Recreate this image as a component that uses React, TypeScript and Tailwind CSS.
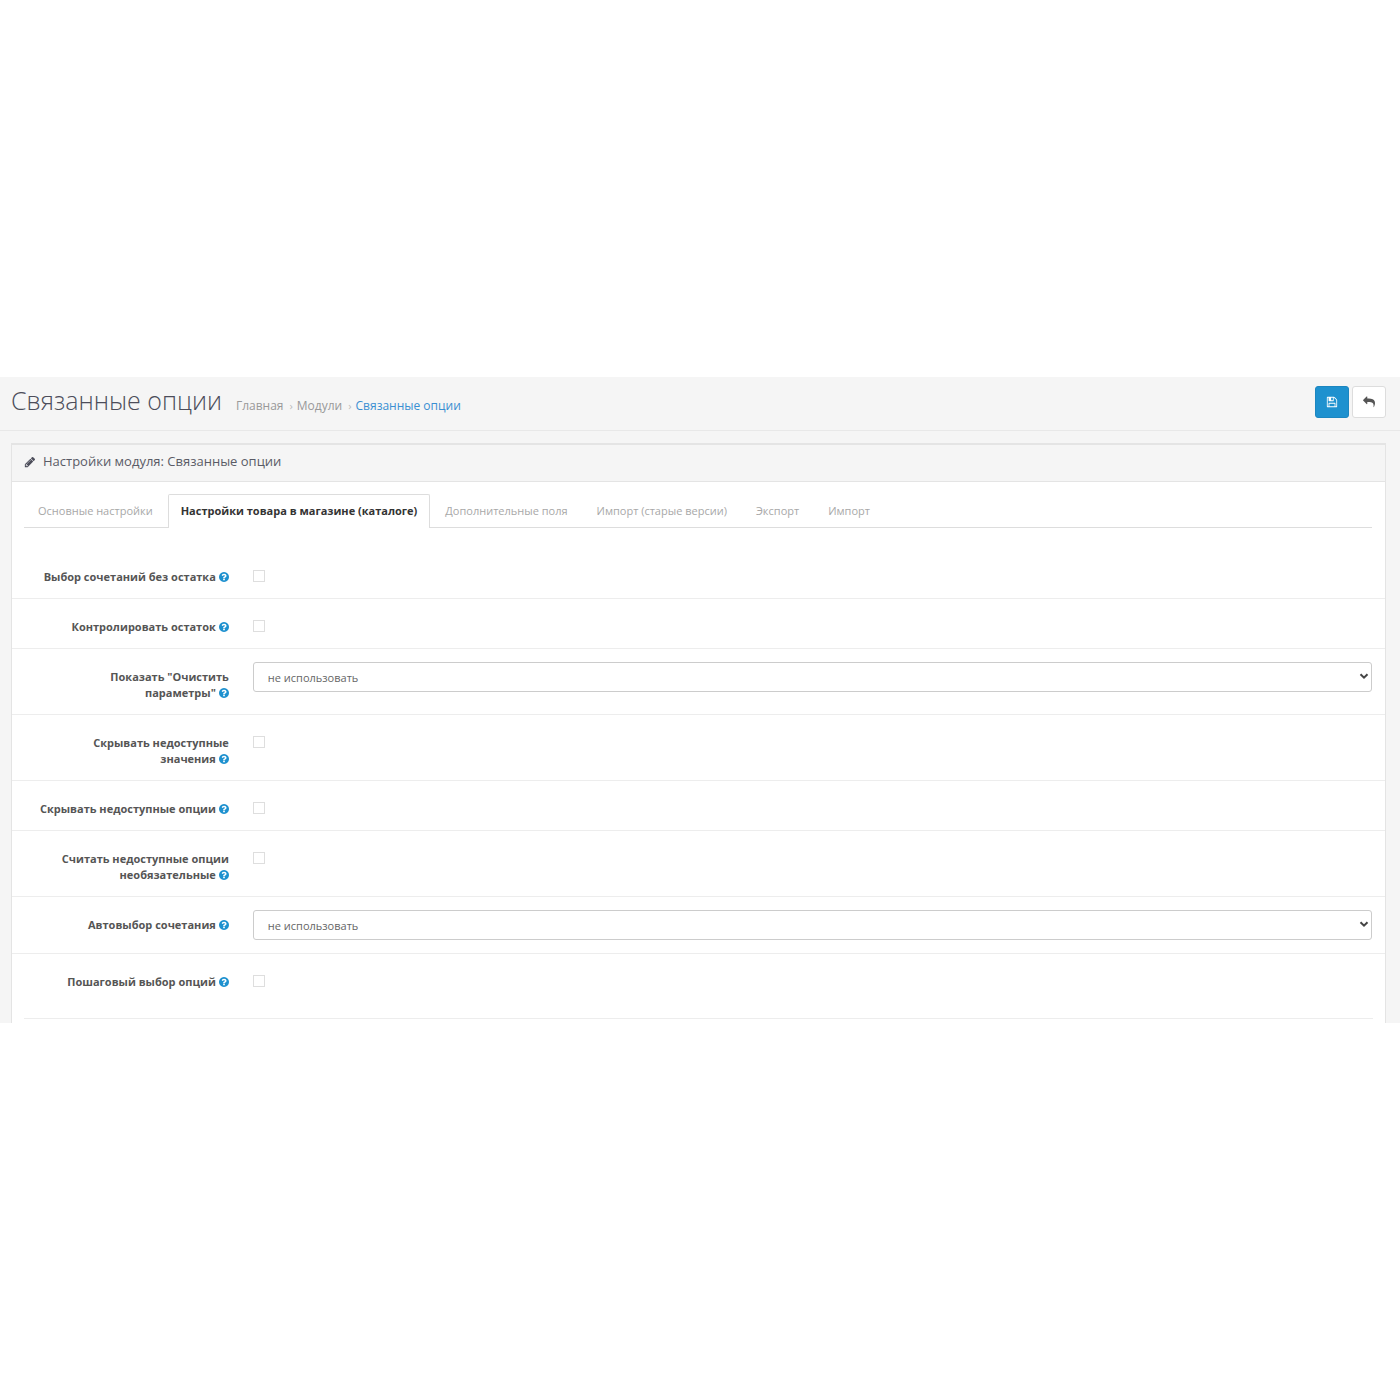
import { useState } from "react";

const icons = {
  save: "M512 1536h768v-384h-768v384zm896 0h128v-896q0-14-10-38.5t-20-34.5l-281-281q-10-10-34-20t-39-10v416q0 40-28 68t-68 28h-576q-40 0-68-28t-28-68v-416h-128v1280h128v-416q0-40 28-68t68-28h832q40 0 68 28t28 68v416zm-384-928v-320q0-13-9.5-22.5t-22.5-9.5h-192q-13 0-22.5 9.5t-9.5 22.5v320q0 13 9.5 22.5t22.5 9.5h192q13 0 22.5-9.5t9.5-22.5zm640 32v928q0 40-28 68t-68 28h-1344q-40 0-68-28t-28-68v-1344q0-40 28-68t68-28h928q40 0 88 20t76 48l280 280q28 28 48 76t20 88z",
  reply: "M1792 1120q0 166-127 451-3 7-10.5 24t-13.5 30-13 22q-12 17-28 17-15 0-23.5-10t-8.5-25q0-9 2.5-26.5t2.5-23.5q5-68 5-123 0-101-17.5-181t-48.5-138.5-80-101-105.5-69.5-133-42.5-154-21.5-175.5-6h-224v256q0 26-19 45t-45 19-45-19l-512-512q-19-19-19-45t19-45l512-512q19-19 45-19t45 19 19 45v256h224q713 0 875 403 53 134 53 333z",
  pencil: "M491 1536l91-91-235-235-91 91v107h128v128h107zm523-928q0-22-22-22-10 0-17 7l-542 542q-7 7-7 17 0 22 22 22 10 0 17-7l542-542q7-7 7-17zm-54-192l416 416-832 832h-416v-416zm683 96q0 53-37 90l-166 166-416-416 166-165q36-38 90-38 53 0 91 38l235 234q37 39 37 91z",
  question: "M1024 1376v-192q0-14-9-23t-23-9h-192q-14 0-23 9t-9 23v192q0 14 9 23t23 9h192q14 0 23-9t9-23zm256-672q0-88-55.5-163t-138.5-116-170-41q-243 0-371 213-15 24 8 42l132 100q7 6 19 6 16 0 25-12 53-68 86-92 34-24 86-24 48 0 85.5 26t37.5 59q0 38-20 61t-68 45q-63 28-115.5 86.5t-52.5 125.5v36q0 14 9 23t23 9h192q14 0 23-9t9-23q0-19 21.5-49.5t54.5-49.5q32-18 49-28.5t46-35 44.5-48 28-60.5 12.5-81zm384 192q0 209-103 385.5t-279.5 279.5-385.5 103-385.5-103-279.5-279.5-103-385.5 103-385.5 279.5-279.5 385.5-103 385.5 103 279.5 279.5 103 385.5z",
};

type IconProps = { name: keyof typeof icons; className: string; viewBox?: string };

function Icon({ name, className, viewBox = "0 0 1792 1792" }: IconProps) {
  return (
    <svg viewBox={viewBox} fill="currentColor" aria-hidden="true" className={className}>
      <path d={icons[name]} />
    </svg>
  );
}

const tabs = [
  "Основные настройки",
  "Настройки товара в магазине (каталоге)",
  "Дополнительные поля",
  "Импорт (старые версии)",
  "Экспорт",
  "Импорт",
];

type Field = { id: string; label: string; kind: "check" | "select" };

const fields: Field[] = [
  { id: "allow-zero", label: "Выбор сочетаний без остатка", kind: "check" },
  { id: "stock-control", label: "Контролировать остаток", kind: "check" },
  { id: "show-clear", label: 'Показать "Очистить параметры"', kind: "select" },
  { id: "hide-values", label: "Скрывать недоступные значения", kind: "check" },
  { id: "hide-options", label: "Скрывать недоступные опции", kind: "check" },
  { id: "not-required", label: "Считать недоступные опции необязательные", kind: "check" },
  { id: "auto-select", label: "Автовыбор сочетания", kind: "select" },
  { id: "step-by-step", label: "Пошаговый выбор опций", kind: "check" },
];

function FieldRow({ field, first }: { field: Field; first: boolean }) {
  // The help icon stays on the same line as the label's last word.
  const split = field.label.lastIndexOf(" ") + 1;
  return (
    <div className={`grid grid-cols-12 py-[13px] ${first ? "" : "border-t border-[#ededed]"}`}>
      <label
        htmlFor={field.id}
        className="col-span-2 px-3 pt-[7px] text-right text-[11px] leading-4 font-bold text-[#555555]"
      >
        {field.label.slice(0, split)}
        <span className="whitespace-nowrap">
          {field.label.slice(split)}
          <Icon
            name="question"
            viewBox="128 128 1536 1536"
            className="ml-[3px] inline-block size-2.5 align-[-1px] text-[#1e91cf]"
          />
        </span>
      </label>
      <div className="col-span-10 pr-[13px] pl-3">
        {field.kind === "check" ? (
          <input
            id={field.id}
            type="checkbox"
            className="mt-2 block size-3 appearance-none border border-[#dedede] bg-white checked:bg-[#1e91cf]"
          />
        ) : (
          <div className="relative">
            <select
              id={field.id}
              className="block h-[30px] w-full appearance-none rounded-[3px] border border-[#cccccc] bg-white px-3.5 pt-0.5 text-[11px] text-[#666666]"
            >
              <option>не использовать</option>
            </select>
            <svg
              viewBox="0 0 10 7"
              fill="none"
              stroke="#444444"
              strokeWidth="2"
              aria-hidden="true"
              className="pointer-events-none absolute top-[11px] right-[3px] h-[7px] w-2.5"
            >
              <path d="M1.5 1.2 5 4.7 8.5 1.2" />
            </svg>
          </div>
        )}
      </div>
    </div>
  );
}

export default function App() {
  const [active, setActive] = useState(1);
  return (
    <div className="min-h-screen bg-white py-[377px] font-['Open_Sans','Noto_Sans',sans-serif] text-[#666666]">
      <main className="bg-[#f5f5f5]">
        <header className="flex items-start justify-between border-b border-[#e8e8e8] pt-[9px] pr-3.5 pb-3 pl-[11px]">
          <div className="flex items-baseline gap-3.5">
            <h1 className="text-[25px] leading-7 font-light text-[#4c4d5a]">Связанные опции</h1>
            <nav className="flex items-baseline text-[12px] leading-4 text-[#999999]">
              <a href="#home">Главная</a>
              <span className="pr-1 pl-1.5 text-[11px] text-[#bbbbbb]">›</span>
              <a href="#modules">Модули</a>
              <span className="pr-1 pl-1.5 text-[11px] text-[#bbbbbb]">›</span>
              <a href="#options" className="text-[#3a8fd2]">Связанные опции</a>
            </nav>
          </div>
          <div className="flex gap-[3px]">
            <button
              type="button"
              aria-label="Сохранить"
              className="flex h-8 w-[34px] items-center justify-center rounded-[3px] border border-[#1c86c0] bg-[#1e91cf] text-white"
            >
              <Icon name="save" className="size-3" />
            </button>
            <button
              type="button"
              aria-label="Назад"
              className="flex h-8 w-[34px] items-center justify-center rounded-[3px] border border-[#dddddd] bg-white text-[#555555]"
            >
              <Icon name="reply" className="size-3" />
            </button>
          </div>
        </header>

        <div className="pt-3 pr-3.5 pl-[11px]">
          <section className="border border-t-2 border-b-0 border-[#e4e4e4] bg-white">
            <div className="flex items-center gap-[7px] border-b border-[#e4e4e4] bg-[#f5f5f5] px-3 pt-[7px] pb-[10px]">
              <Icon name="pencil" className="size-3 text-[#4c4d5a]" />
              <h2 className="text-[13px] leading-[19px] text-[#5a5b66]">Настройки модуля: Связанные опции</h2>
            </div>
            <div className="pt-3 pr-[13px] pl-3">
              <div role="tablist" className="flex gap-px border-b border-[#dddddd]">
                {tabs.map((tab, i) => (
                  <button
                    key={tab}
                    type="button"
                    role="tab"
                    aria-selected={i === active}
                    onClick={() => setActive(i)}
                    className={
                      i === active
                        ? "-mb-px rounded-t-[2px] border border-b-0 border-[#dddddd] bg-white px-3 pt-2 pb-[9px] text-[11px] leading-4 font-bold text-[#333333]"
                        : "border border-b-0 border-transparent px-[13px] pt-2 pb-2 text-[11px] leading-4 text-[#a8a8a8]"
                    }
                  >
                    {tab}
                  </button>
                ))}
              </div>
            </div>
            <form className="pt-[21px]">
              {fields.map((f, i) => (
                <FieldRow key={f.id} field={f} first={i === 0} />
              ))}
            </form>
            <div className="px-3 pt-[15px] pb-1">
              <hr className="border-[#ededed]" />
            </div>
          </section>
        </div>
      </main>
    </div>
  );
}
